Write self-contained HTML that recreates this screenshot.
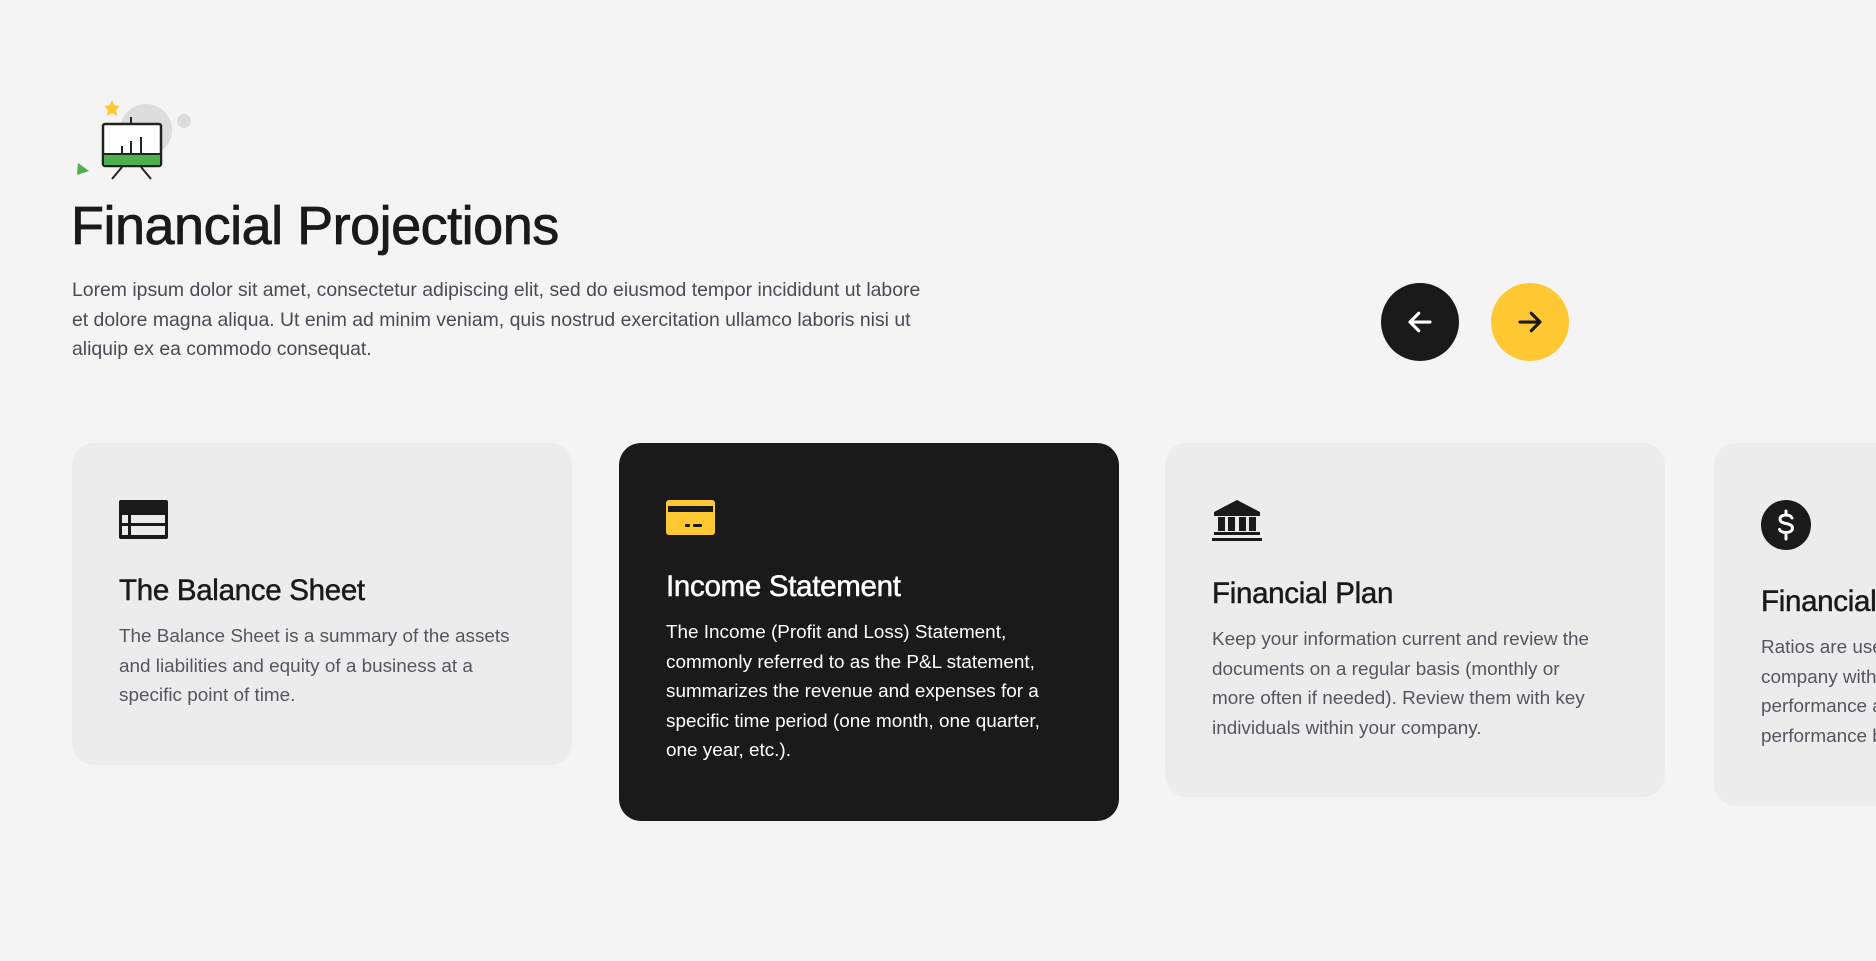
<!DOCTYPE html>
<html><head><meta charset="utf-8"><style>
*{margin:0;padding:0;box-sizing:border-box}
body{width:1876px;height:961px;background:#f4f4f4;font-family:"Liberation Sans",sans-serif;overflow:hidden;position:relative;color:#1a1a1a}
h1{position:absolute;left:71px;top:195px;font-size:54px;font-weight:400;letter-spacing:-0.5px;color:#1a1a1a;-webkit-text-stroke:0.8px #1a1a1a}
.lead{position:absolute;left:72px;top:276px;white-space:nowrap;font-size:19.4px;line-height:29.5px;color:#4a4a55}
.btn{position:absolute;top:283px;width:78px;height:78px;border-radius:50%;display:flex;align-items:center;justify-content:center}
.card{position:absolute;top:443px;width:500px;border-radius:22px;background:#ececec;padding:57px 47px 0;overflow:hidden}
.card h3{font-size:29.5px;font-weight:400;margin-top:30px;-webkit-text-stroke:0.5px currentColor;letter-spacing:-0.3px;white-space:nowrap}
.card p{font-size:18.9px;line-height:29.5px;color:#555560;margin-top:14px;white-space:nowrap}
.dark{background:#1a1a1a;color:#fff}
.dark p{color:#fff}
</style></head><body>
<svg style="position:absolute;left:70px;top:95px" width="130" height="90" viewBox="70 95 130 90">
<circle cx="146" cy="130" r="26" fill="#dcdcdc"/>
<circle cx="184" cy="121" r="7" fill="#dcdcdc"/>
<polygon points="112,100 114.5,105.5 120,106 116,110 117,116 112,113 107,116 108,110 104,106 109.5,105.5" fill="#ffc833"/>
<polygon points="78,163 89,171 77,175" fill="#4caf50"/>
<line x1="131" y1="117" x2="131" y2="125" stroke="#222" stroke-width="2"/>
<rect x="103" y="124" width="58" height="42" rx="2" fill="#fff" stroke="#222" stroke-width="2.5"/>
<rect x="104" y="154" width="56" height="11" fill="#4caf50"/>
<line x1="103" y1="154" x2="161" y2="154" stroke="#222" stroke-width="2"/>
<line x1="122" y1="154" x2="122" y2="146" stroke="#222" stroke-width="2"/>
<line x1="131" y1="154" x2="131" y2="141" stroke="#222" stroke-width="2"/>
<line x1="141" y1="154" x2="141" y2="137" stroke="#222" stroke-width="2"/>
<line x1="122" y1="167" x2="112" y2="179" stroke="#222" stroke-width="2"/>
<line x1="141" y1="167" x2="151" y2="179" stroke="#222" stroke-width="2"/>
</svg>
<h1>Financial Projections</h1>
<div class="lead">Lorem ipsum dolor sit amet, consectetur adipiscing elit, sed do eiusmod tempor incididunt ut labore<br>et dolore magna aliqua. Ut enim ad minim veniam, quis nostrud exercitation ullamco laboris nisi ut<br>aliquip ex ea commodo consequat.</div>
<div class="btn" style="left:1381px;background:#1a1a1a"><svg width="30" height="30" viewBox="0 0 24 24" fill="none" stroke="#fff" stroke-width="2.5" stroke-linecap="round" stroke-linejoin="round"><path d="M20 12H4M11 5l-7 7 7 7"/></svg></div>
<div class="btn" style="left:1491px;background:#ffc833"><svg width="30" height="30" viewBox="0 0 24 24" fill="none" stroke="#1a1a1a" stroke-width="2.5" stroke-linecap="round" stroke-linejoin="round"><path d="M4 12h16M13 5l7 7-7 7"/></svg></div>

<div class="card" style="left:72px;height:322px">
<svg width="49" height="39" viewBox="0 0 49 39"><rect width="49" height="39" rx="2" fill="#1a1a1a"/><rect x="3" y="15" width="6" height="8" fill="#ececec"/><rect x="12" y="15" width="34" height="8" fill="#ececec"/><rect x="3" y="26" width="6" height="9" fill="#ececec"/><rect x="12" y="26" width="34" height="9" fill="#ececec"/></svg>
<h3>The Balance Sheet</h3>
<p>The Balance Sheet is a summary of the assets<br>and liabilities and equity of a business at a<br>specific point of time.</p>
</div>
<div class="card dark" style="left:619px;height:378px">
<svg width="49" height="35" viewBox="0 0 49 35"><rect width="49" height="35" rx="3" fill="#ffc833"/><rect x="2" y="6" width="45" height="6" fill="#1a1a1a"/><rect x="19" y="24" width="5" height="3" rx="1" fill="#1a1a1a"/><rect x="27" y="24" width="9" height="3" rx="1" fill="#1a1a1a"/></svg>
<h3>Income Statement</h3>
<p>The Income (Profit and Loss) Statement,<br>commonly referred to as the P&amp;L statement,<br>summarizes the revenue and expenses for a<br>specific time period (one month, one quarter,<br>one year, etc.).</p>
</div>
<div class="card" style="left:1165px;height:354px">
<svg width="50" height="42" viewBox="0 0 50 42"><polygon points="25,0 48,12 2,12" fill="#1a1a1a"/><rect x="2" y="12" width="46" height="4" fill="#1a1a1a"/><rect x="6" y="17" width="7" height="14" fill="#1a1a1a"/><rect x="16" y="17" width="7" height="14" fill="#1a1a1a"/><rect x="27" y="17" width="7" height="14" fill="#1a1a1a"/><rect x="37" y="17" width="7" height="14" fill="#1a1a1a"/><rect x="2" y="32" width="46" height="3" fill="#1a1a1a"/><rect x="0" y="38" width="50" height="3" fill="#1a1a1a"/></svg>
<h3>Financial Plan</h3>
<p>Keep your information current and review the<br>documents on a regular basis (monthly or<br>more often if needed). Review them with key<br>individuals within your company.</p>
</div>
<div class="card" style="left:1714px;height:363px">
<svg width="50" height="50" viewBox="0 0 50 50"><circle cx="25" cy="25" r="25" fill="#1a1a1a"/><path d="M31 18c-1-2-3.5-3-6-3s-6 1-6 4 3 4 6 4.5 6.5 1.5 6.5 4.5-3 4.5-6.5 4.5-5.5-1-6.5-3M25 11v4M25 35v4" fill="none" stroke="#fff" stroke-width="3" stroke-linecap="round"/></svg>
<h3>Financial Ratios</h3>
<p>Ratios are used to compare a<br>company with its past<br>performance and industry<br>performance benchmarks.</p>
</div>
</body></html>
